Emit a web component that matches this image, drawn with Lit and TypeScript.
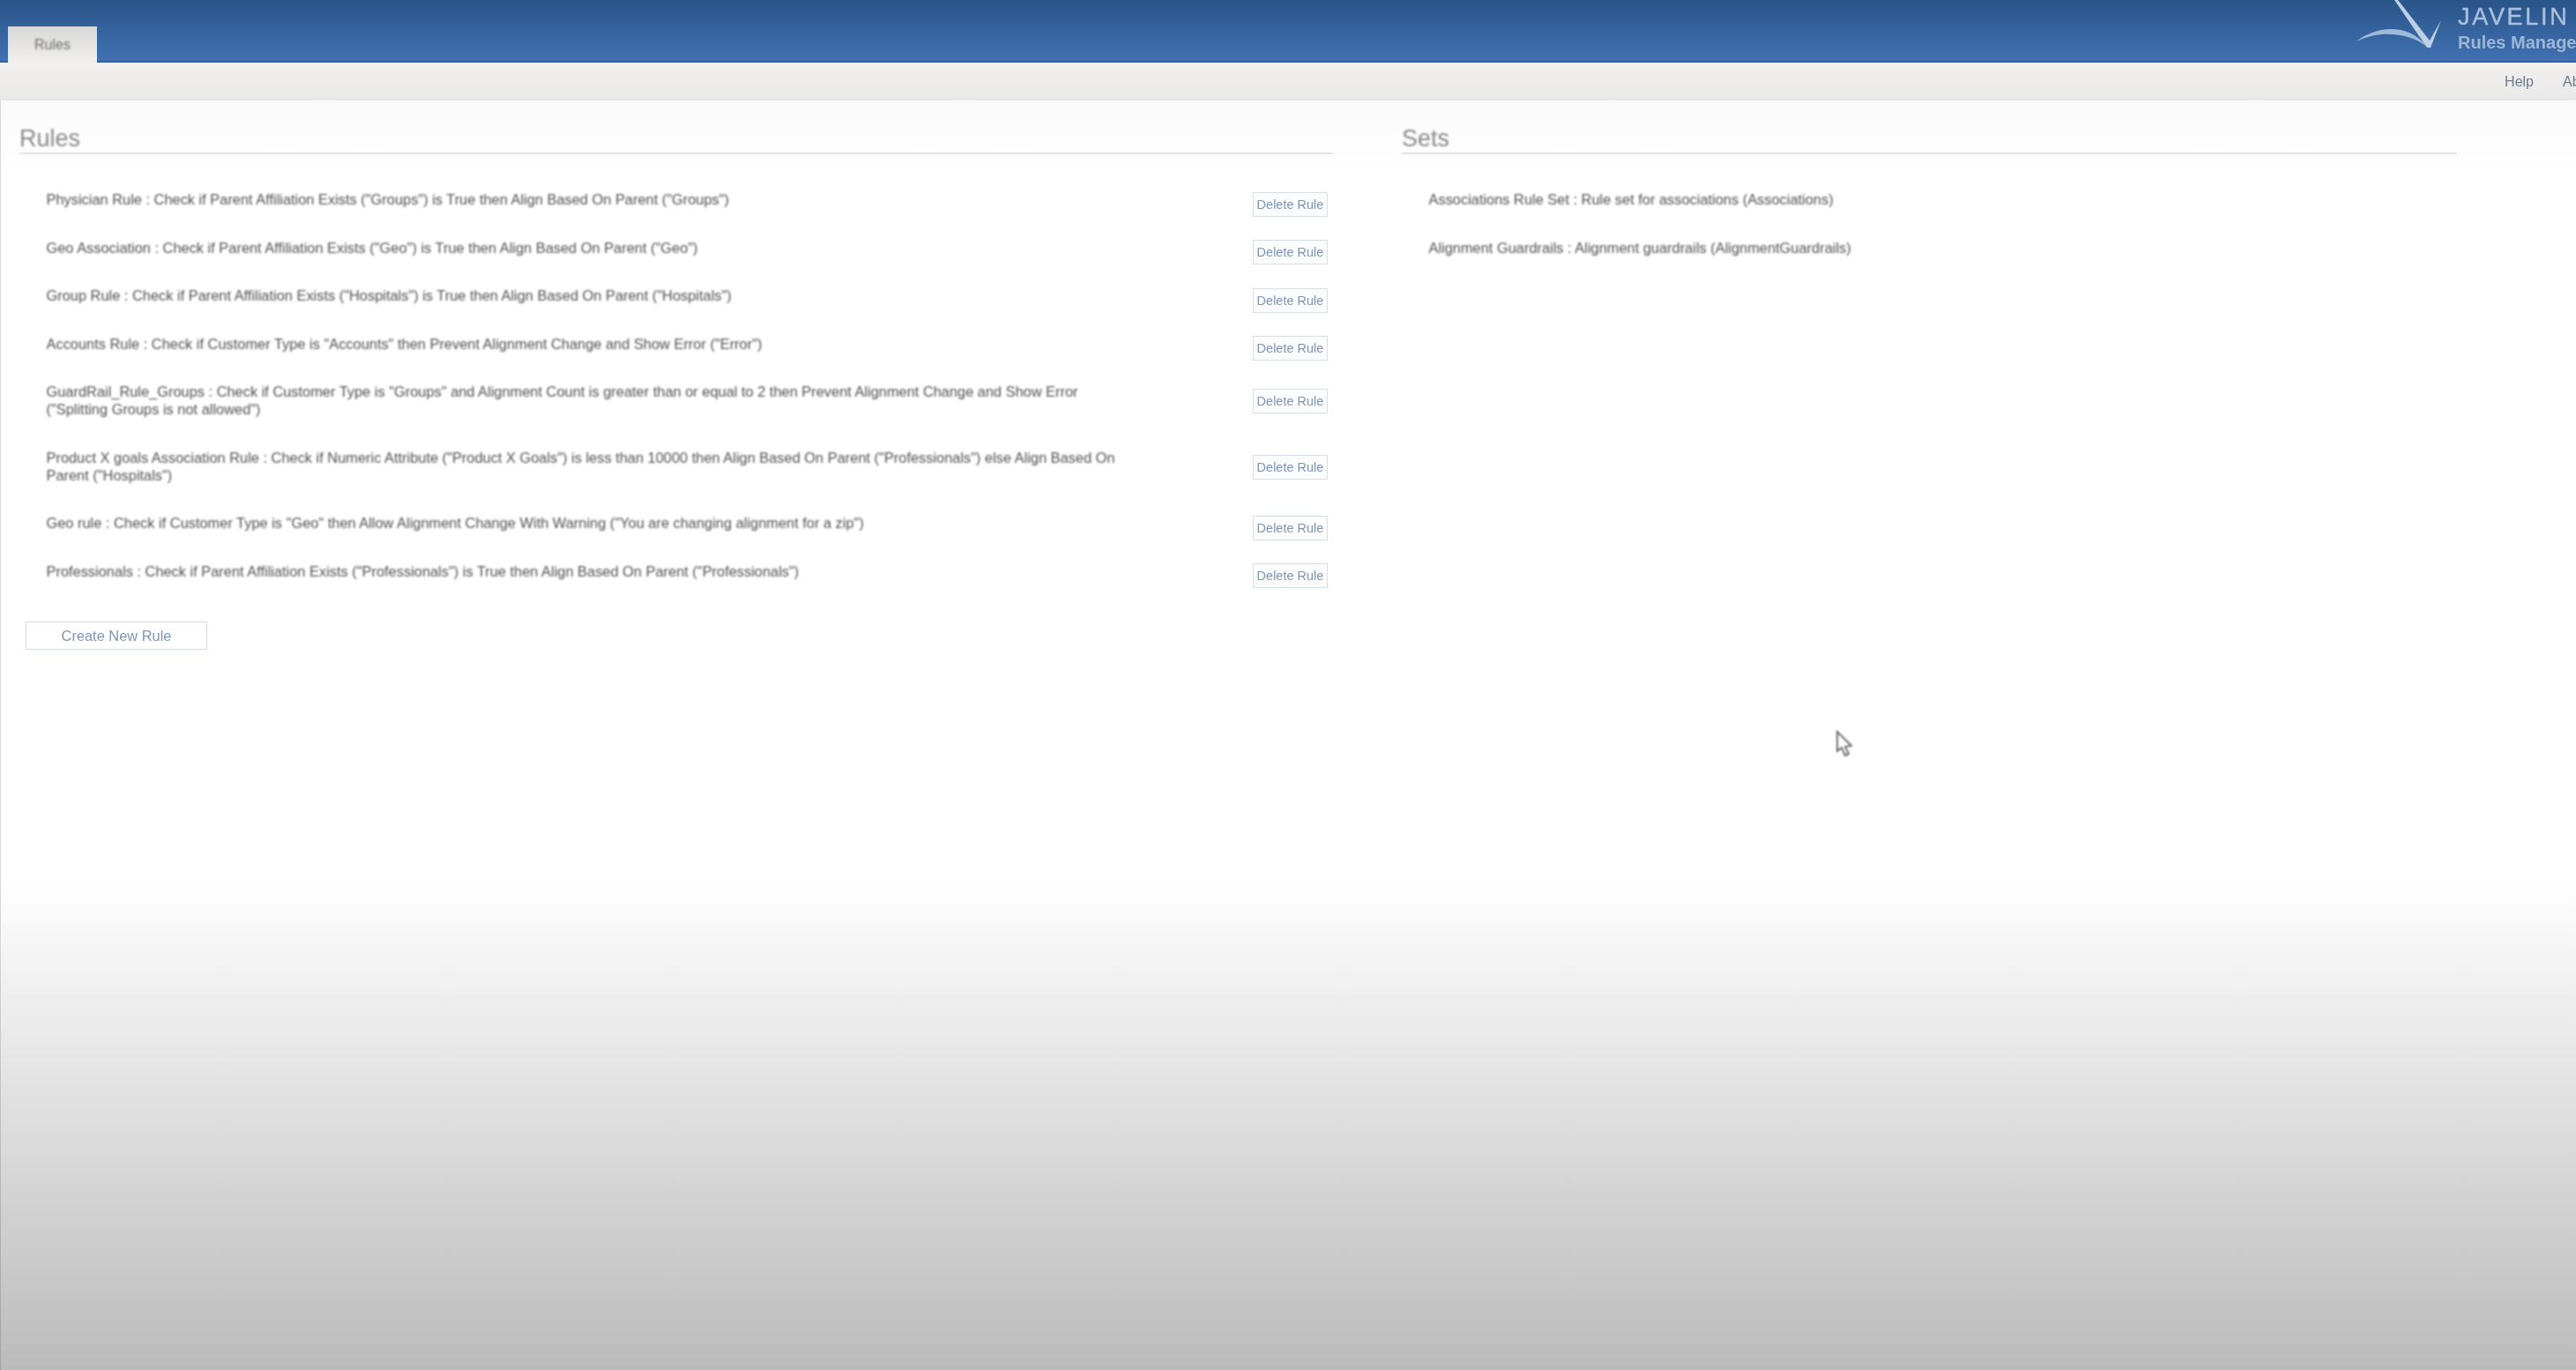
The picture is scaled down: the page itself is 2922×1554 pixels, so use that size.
import { LitElement, html, css } from "lit";
import { customElement } from "lit/decorators.js";

const rules = [
  { t: 'Physician Rule : Check if Parent Affiliation Exists ("Groups") is True then Align Based On Parent ("Groups")' },
  { t: 'Geo Association : Check if Parent Affiliation Exists ("Geo") is True then Align Based On Parent ("Geo")' },
  { t: 'Group Rule : Check if Parent Affiliation Exists ("Hospitals") is True then Align Based On Parent ("Hospitals")' },
  { t: 'Accounts Rule : Check if Customer Type is "Accounts" then Prevent Alignment Change and Show Error ("Error")' },
  { t: 'GuardRail_Rule_Groups : Check if Customer Type is "Groups" and Alignment Count is greater than or equal to 2 then Prevent Alignment Change and Show Error ("Splitting Groups is not allowed")', two: true },
  { t: 'Product X goals Association Rule : Check if Numeric Attribute ("Product X Goals") is less than 10000 then Align Based On Parent ("Professionals") else Align Based On Parent ("Hospitals")', two: true },
  { t: 'Geo rule : Check if Customer Type is "Geo" then Allow Alignment Change With Warning ("You are changing alignment for a zip")' },
  { t: 'Professionals : Check if Parent Affiliation Exists ("Professionals") is True then Align Based On Parent ("Professionals")' },
];
const sets = [
  'Associations Rule Set : Rule set for associations (Associations)',
  'Alignment Guardrails : Alignment guardrails (AlignmentGuardrails)',
];

@customElement("app-root")
export class AppRoot extends LitElement {
  static styles = css`
    :host {
      display: block;
      position: relative;
      height: 1554px;
      overflow: hidden;
      font-family: "Liberation Sans", Arial, sans-serif;
      background: linear-gradient(to bottom, #ffffff 0, #ffffff 996px, #bbbbbb 1554px);
    }
    .top {
      height: 71px;
      display: flex;
      justify-content: space-between;
      align-items: flex-end;
      background: linear-gradient(to bottom, #2a5588 0, #3f6fb0 64px, #4472b6 68px, #2f5687 71px);
      padding-left: 9px;
      overflow: hidden;
    }
    .tab {
      width: 101px;
      height: 41px;
      box-sizing: border-box;
      padding-top: 12px;
      text-align: center;
      font-size: 16px;
      line-height: 18px;
      color: #6f6f6f;
      background: linear-gradient(to bottom, #d8d8d8, #f0efed);
    }
    .tab span { display: inline-block; filter: blur(0.8px); }
    .brand {
      width: 262px;
      height: 71px;
      flex: none;
      display: flex;
      gap: 18px;
      overflow: hidden;
    }
    .brand svg { width: 110px; height: 60px; flex: none; filter: blur(0.7px); }
    .words { white-space: nowrap; color: #a8c0db; filter: blur(0.7px); }
    .jav { font-size: 27px; line-height: 29px; letter-spacing: 2.7px; padding-top: 5px; -webkit-text-stroke: 0.4px #a8c0db; }
    .mgr { font-size: 20px; line-height: 20px; font-weight: bold; color: #9cb6d3; margin-top: 4px; }
    .sub {
      height: 43px;
      box-sizing: border-box;
      display: flex;
      justify-content: flex-end;
      align-items: center;
      gap: 33px;
      background: linear-gradient(to bottom, #f1f0ee, #e8e8e8);
      font-size: 16px;
      color: #6c7a92;
      overflow: hidden;
      white-space: nowrap;
    }
    .sub span { filter: blur(0.7px); flex: none; }
    .sub .about { width: 15px; overflow: hidden; }
    .main {
      display: grid;
      grid-template-columns: 1489px 1196px;
      align-content: start;
      column-gap: 79px;
      padding: 20px 0 0 22px;
      height: 1420px;
      background: linear-gradient(to bottom, #fafafa, rgba(255,255,255,0) 90px);
      border-left: 1px solid rgba(0,0,0,0.14);
      border-bottom: 1px solid rgba(0,0,0,0.14);
    }
    section { margin-left: -1px; }
    h2 {
      margin: 0;
      font-size: 27px;
      font-weight: normal;
      line-height: 46px;
      color: #8a8a8a;
      border-bottom: 2px solid #e4e4e4;
      height: 39px;
    }
    h2 span { filter: blur(0.8px); display: inline-block; }
    .list { padding: 41px 0 0 6px; }
    .row { display: flex; justify-content: space-between; align-items: flex-start; padding-left: 24.5px; }
    .row .txt {
      width: 1230px;
      padding-bottom: 34.5px;
      font-size: 16.4px;
      line-height: 20px;
      color: #505050;
      filter: blur(0.8px);
    }
    .del {
      flex: none;
      width: 85px;
      height: 28px;
      margin: 1.5px 6px 0 0;
      box-sizing: border-box;
      border: 1px solid #d5dde8;
      background: #fbfcfe;
      color: #7d94ba;
      font: 14.5px/26px "Liberation Sans", Arial, sans-serif;
      text-align: center;
      padding: 0;
      filter: blur(0.6px);
    }
    .row.two .del { margin-top: 7px; }
    .new {
      display: block;
      width: 206px;
      height: 32px;
      margin: 13px 0 0 1px;
      box-sizing: border-box;
      border: 1px solid #d4d9e2;
      background: #fff;
      color: #8195b6;
      font: 16.4px/30px "Liberation Sans", Arial, sans-serif;
      text-align: center;
      padding: 0;
      filter: blur(0.6px);
    }
    .cursor { position: absolute; left: 2082px; top: 828px; width: 22px; height: 32px; filter: blur(0.8px); }
  `;

  render() {
    return html`
      <div class="top">
        <div class="tab"><span>Rules</span></div>
        <div class="brand">
          <svg viewBox="0 0 110 60">
            <path fill="#bdd0e6" d="M56 0 L60 0 L96 46 L109 23 L97 54 L93 54 Z" />
            <path fill="#9fbbd9" d="M13 47 C33 31 70 24 93 53 C72 37 40 34 13 47 Z" />
          </svg>
          <div class="words">
            <div class="jav">JAVELIN</div>
            <div class="mgr">Rules Manager</div>
          </div>
        </div>
      </div>
      <div class="sub"><span>Help</span><span class="about">About</span></div>
      <div class="main">
        <section>
          <h2><span>Rules</span></h2>
          <div class="list">
            ${rules.map(
              (r) => html`<div class="row ${r.two ? "two" : ""}">
                <div class="txt">${r.t}</div>
                <button class="del">Delete Rule</button>
              </div>`
            )}
            <button class="new">Create New Rule</button>
          </div>
        </section>
        <section>
          <h2><span>Sets</span></h2>
          <div class="list">
            ${sets.map((s) => html`<div class="row"><div class="txt">${s}</div></div>`)}
          </div>
        </section>
      </div>
      <svg class="cursor" viewBox="0 0 22 32">
        <path d="M2 2 L2 24 L7 20 L11 29 L15 27 L11 19 L18 18 Z" fill="#fff" stroke="#555" stroke-width="1.7" />
      </svg>
    `;
  }
}
